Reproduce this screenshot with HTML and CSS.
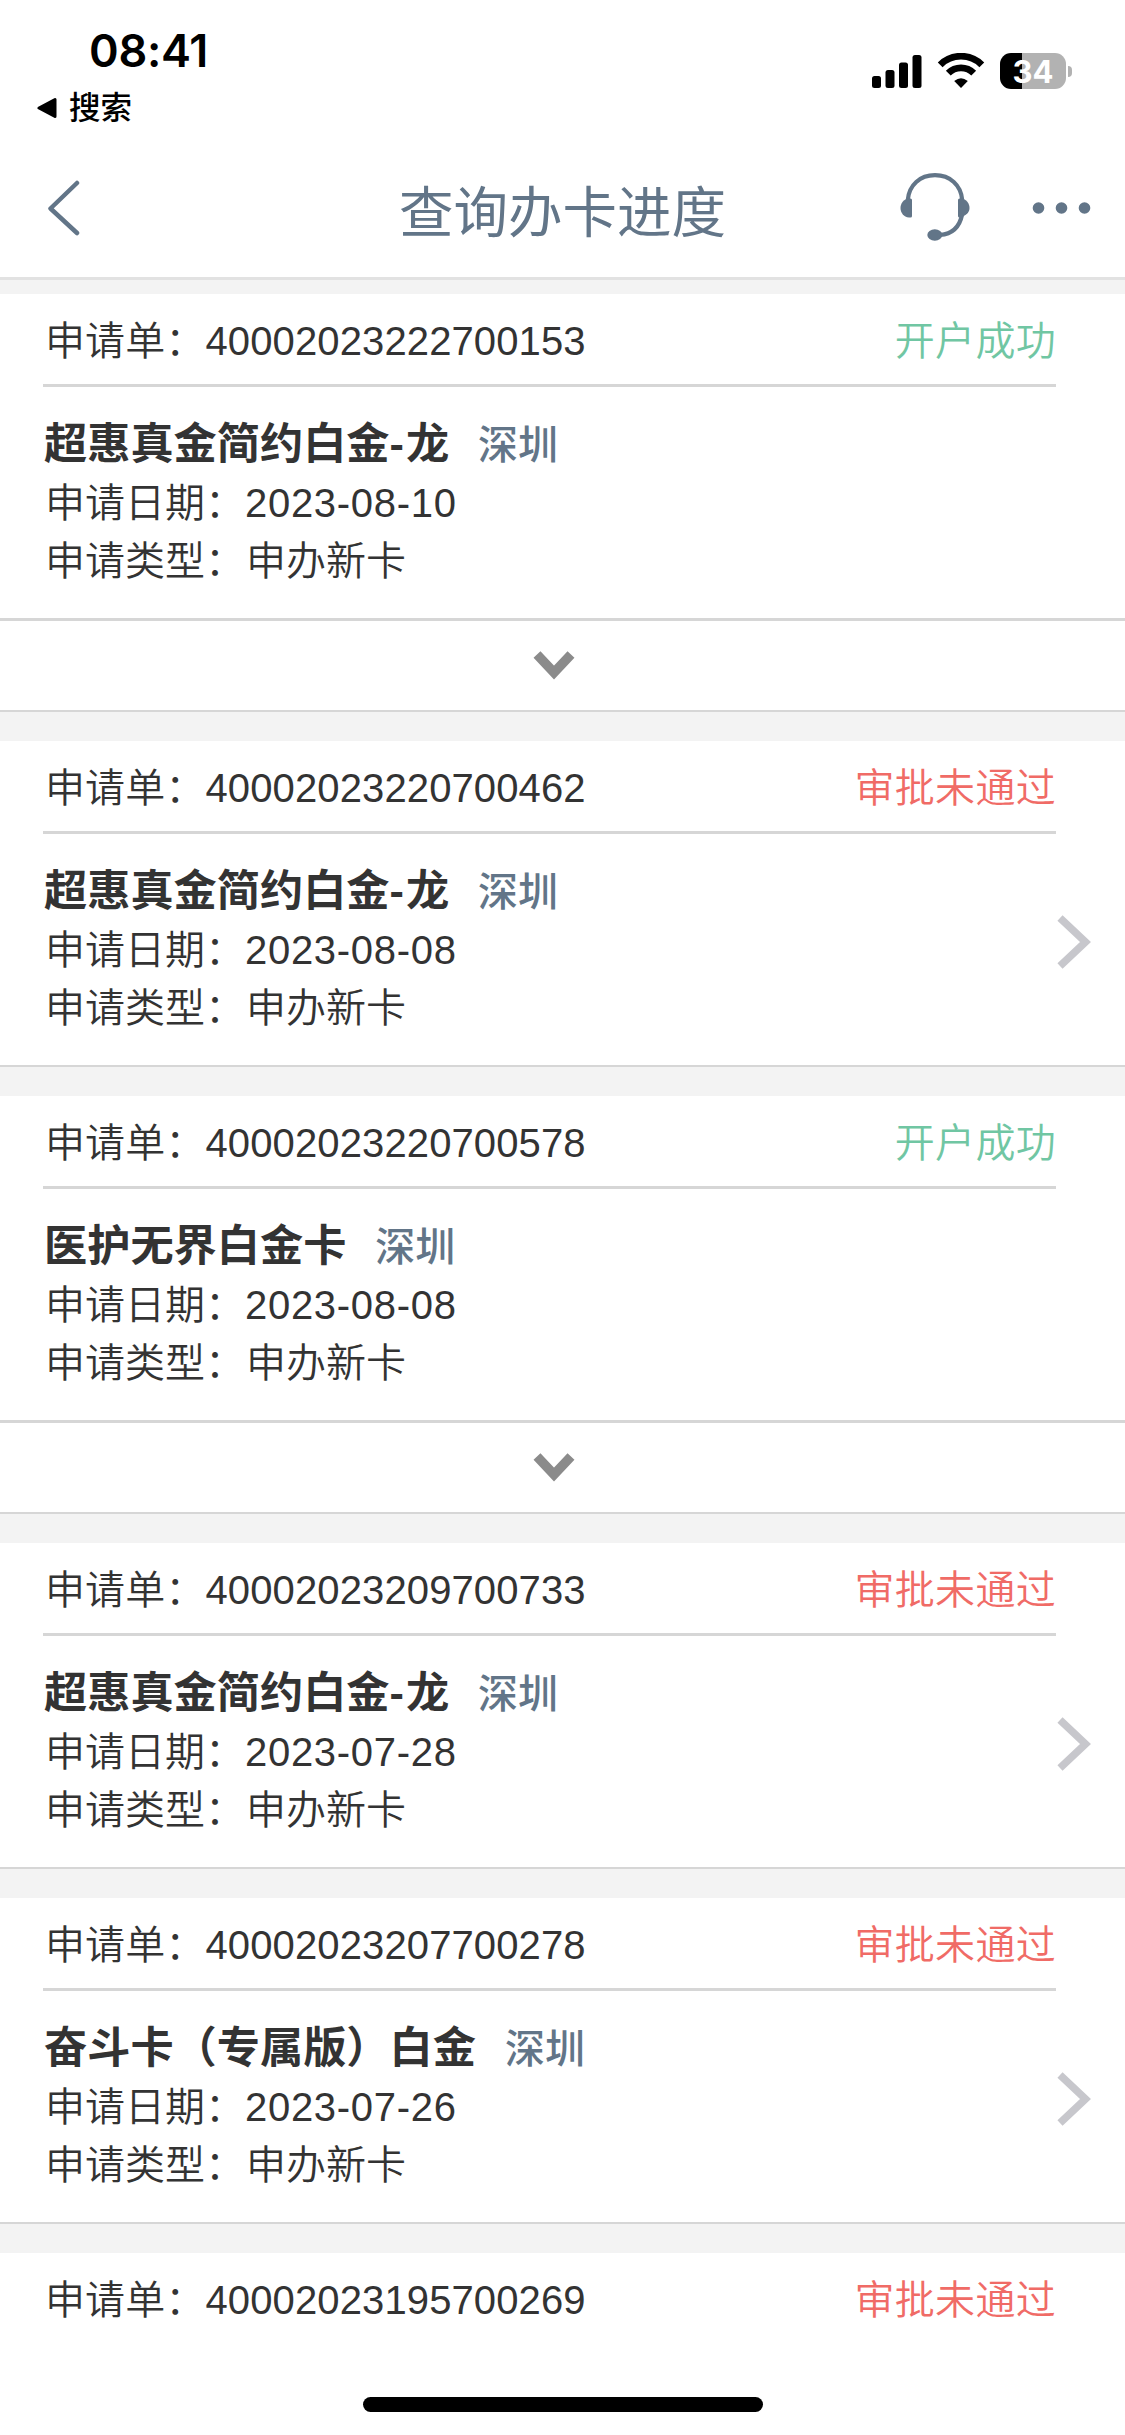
FILE: index.html
```html
<!doctype html>
<html lang="zh-CN">
  <head>
    <meta charset="utf-8" />
    <meta name="viewport" content="width=device-width" />
    <title>查询办卡进度</title>
    <link rel="stylesheet" href="styles.css">
  </head>
  <body>
    <svg class="sprite" aria-hidden="true">
      <symbol id="chevron-down" viewBox="0 0 42 30">
        <path d="M4 4.500 21 22.500 38 4.500" fill="none" stroke="#8b8b8b" stroke-width="9.500" />
      </symbol>
      <symbol id="chevron-right" viewBox="0 0 34 56">
        <path d="M3 4 28.500 28 3 52" fill="none" stroke="#c7c7cc" stroke-width="7.500" />
      </symbol>
    </svg>
    <header>
      <div class="status-bar">
        <div class="clock">
          <time>08:41</time>
          <a class="return">
            <svg width="20" height="22" viewBox="0 0 20 22"><path d="M2 11 18 2.500V19.500Z" stroke="#000" stroke-width="3" stroke-linejoin="round" /></svg>
            搜索
          </a>
        </div>
        <div class="indicators">
          <svg width="50" height="34" viewBox="0 0 50 34">
            <rect x="0" y="22" width="9" height="12" rx="2.500" />
            <rect x="13.500" y="16" width="9" height="18" rx="2.500" />
            <rect x="27" y="8.500" width="9" height="25.500" rx="2.500" />
            <rect x="40.500" y="1" width="9" height="33" rx="2.500" />
          </svg>
          <svg width="48" height="36" viewBox="0 0 48 36">
            <path d="M3.200 11.800A29.500 29.500 0 0 1 44.800 11.800" fill="none" stroke="#000" stroke-width="6.800" />
            <path d="M11.300 20.200A18 18 0 0 1 36.700 20.200" fill="none" stroke="#000" stroke-width="6.800" />
            <path d="M24 35 17.200 28Q24 22.500 30.800 28Z" />
          </svg>
          <div class="battery"><span>34</span></div>
        </div>
      </div>
      <nav>
        <svg class="back" width="34" height="56" viewBox="0 0 34 56"><path d="M30 3 3.500 28.500 30 53" fill="none" stroke="#627588" stroke-width="4.500" stroke-linecap="round" stroke-linejoin="round" /></svg>
        <h1>查询办卡进度</h1>
        <svg class="service" width="70" height="68" viewBox="0 0 70 68">
          <g fill="none" stroke="#627588" stroke-width="4.200">
            <path d="M7.800 27C9 12 20 2.200 35 2.200S61 12 62.200 27" />
            <path d="M62 42C59.500 54 52 61 40 62" />
          </g>
          <g fill="#627588">
            <path d="M10.500 25.500Q12 25.500 12 27V43Q12 44.500 10.500 44.500H9C3.500 44 .5 39.500 .5 35S3.500 26 9 25.500Z" />
            <path d="M59.500 25.500Q58 25.500 58 27V43Q58 44.500 59.500 44.500H61C66.500 42 69.500 39.500 69.500 35S66.500 26 61 25.500Z" />
            <ellipse cx="34.800" cy="62" rx="7.500" ry="5.800" />
          </g>
        </svg>
        <svg class="more" width="60" height="12" viewBox="0 0 60 12" fill="#627588">
          <circle cx="6.500" cy="6" r="5.800" />
          <circle cx="29.500" cy="6" r="5.800" />
          <circle cx="52.500" cy="6" r="5.800" />
        </svg>
      </nav>
    </header>
    <main>
      <section>
        <div class="order"><p>申请单：40002023222700153</p><span class="success">开户成功</span></div>
        <div class="detail">
          <h2>超惠真金简约白金<i>-</i>龙 <small>深圳</small></h2>
          <p>申请日期：<time>2023-08-10</time></p>
          <p>申请类型：<span>申办新卡</span></p>
        </div>
        <div class="expand"><svg width="42" height="30"><use href="#chevron-down" /></svg></div>
      </section>
      <section>
        <div class="order"><p>申请单：40002023220700462</p><span class="fail">审批未通过</span></div>
        <div class="detail">
          <h2>超惠真金简约白金<i>-</i>龙 <small>深圳</small></h2>
          <p>申请日期：<time>2023-08-08</time></p>
          <p>申请类型：<span>申办新卡</span></p>
          <svg class="arrow" width="34" height="56"><use href="#chevron-right" /></svg>
        </div>
      </section>
      <section>
        <div class="order"><p>申请单：40002023220700578</p><span class="success">开户成功</span></div>
        <div class="detail">
          <h2>医护无界白金卡 <small>深圳</small></h2>
          <p>申请日期：<time>2023-08-08</time></p>
          <p>申请类型：<span>申办新卡</span></p>
        </div>
        <div class="expand"><svg width="42" height="30"><use href="#chevron-down" /></svg></div>
      </section>
      <section>
        <div class="order"><p>申请单：40002023209700733</p><span class="fail">审批未通过</span></div>
        <div class="detail">
          <h2>超惠真金简约白金<i>-</i>龙 <small>深圳</small></h2>
          <p>申请日期：<time>2023-07-28</time></p>
          <p>申请类型：<span>申办新卡</span></p>
          <svg class="arrow" width="34" height="56"><use href="#chevron-right" /></svg>
        </div>
      </section>
      <section>
        <div class="order"><p>申请单：40002023207700278</p><span class="fail">审批未通过</span></div>
        <div class="detail">
          <h2>奋斗卡（专属版）白金 <small>深圳</small></h2>
          <p>申请日期：<time>2023-07-26</time></p>
          <p>申请类型：<span>申办新卡</span></p>
          <svg class="arrow" width="34" height="56"><use href="#chevron-right" /></svg>
        </div>
      </section>
      <section class="last">
        <div class="order"><p>申请单：40002023195700269</p><span class="fail">审批未通过</span></div>
      </section>
    </main>
    <div class="home-indicator"></div>
  </body>
</html>
```
FILE: styles.css
```css
*, *::before, *::after {
  box-sizing: border-box;
}

body {
  position: relative;
  display: flex;
  flex-direction: column;
  height: 2435px;
  margin: 0;
  overflow: hidden;
  background: #f3f3f3;
  color: #333;
  font: 350 40px/58px "Liberation Sans", "Noto Sans CJK SC", sans-serif;
}

h1, h2, p {
  margin: 0;
}

svg {
  display: block;
  flex: none;
}

.sprite {
  position: absolute;
  width: 0;
  height: 0;
}

header {
  height: 280px;
  border-bottom: 3px solid #e2e2e2;
  background: #fff;
}

.status-bar {
  display: flex;
  justify-content: space-between;
  height: 138px;
  padding: 24px 59px 0 37px;
  color: #000;
}

.clock time {
  display: block;
  padding-left: 52px;
  font: 600 45px/54px Inter, sans-serif;
  letter-spacing: -0.300px;
}

.return {
  display: flex;
  align-items: center;
  gap: 12px;
  height: 58px;
  padding-top: 1px;
  font-size: 31.500px;
  font-weight: 500;
}

.indicators {
  display: flex;
  align-items: center;
  height: 46px;
  margin-top: 24px;
}

.indicators svg + svg {
  margin: 0 15px 0 15px;
}

.battery {
  position: relative;
  width: 66px;
  height: 36px;
  border-radius: 11px;
  background: linear-gradient(to right, #000 34%, #b2b2b2 34%);
  color: #fff;
  font: 700 31px/37px Inter, sans-serif;
  text-align: center;
}

.battery::after {
  content: "";
  position: absolute;
  top: 13px;
  right: -6px;
  width: 4px;
  height: 11px;
  border-radius: 0 5px 5px 0;
  background: #b2b2b2;
}

nav {
  display: flex;
  align-items: center;
  height: 139px;
  padding: 0 33px 0 47px;
  color: #627588;
}

h1 {
  margin: 13px auto 0 318px;
  font-size: 54.500px;
  font-weight: 400;
  line-height: 80px;
}

.service {
  margin: -2px 62px 0 0;
}

main {
  flex: 1;
  padding-top: 14px;
}

section {
  margin-bottom: 29px;
  border-bottom: 2px solid #d6d6d6;
  background: #fff;
}

.order {
  display: flex;
  justify-content: space-between;
  height: 93px;
  margin: 0 69px 0 43px;
  padding: 18px 0 0 2px;
  border-bottom: 3px solid #d6d6d6;
  letter-spacing: 0.120px;
}

.success {
  color: #70c6a3;
}

.fail {
  color: #f06b66;
}

.success, .fail {
  letter-spacing: 0.300px;
}

.detail {
  position: relative;
  height: 231px;
  padding: 28px 44px 0;
}

.detail h2 {
  font-size: 43.200px;
  font-weight: 700;
}

.detail h2 i {
  font-style: normal;
  letter-spacing: 2px;
}

.detail small {
  margin-left: 17px;
  color: #627588;
  font-size: 40px;
  font-weight: 500;
}

.detail p {
  padding-left: 1px;
}

.detail p time {
  letter-spacing: 0.700px;
}

.detail p span {
  margin-left: 1px;
}

.arrow {
  position: absolute;
  top: 80px;
  right: 34px;
}

.expand {
  height: 92px;
  padding: 29px 0 0 533px;
  border-top: 3px solid #d6d6d6;
}

.last {
  height: 182px;
  margin: 0;
  border: 0;
}

.last .order {
  border: 0;
}

.home-indicator {
  position: absolute;
  bottom: 23px;
  left: 363px;
  width: 400px;
  height: 15px;
  border-radius: 8px;
  background: #000;
}
```
